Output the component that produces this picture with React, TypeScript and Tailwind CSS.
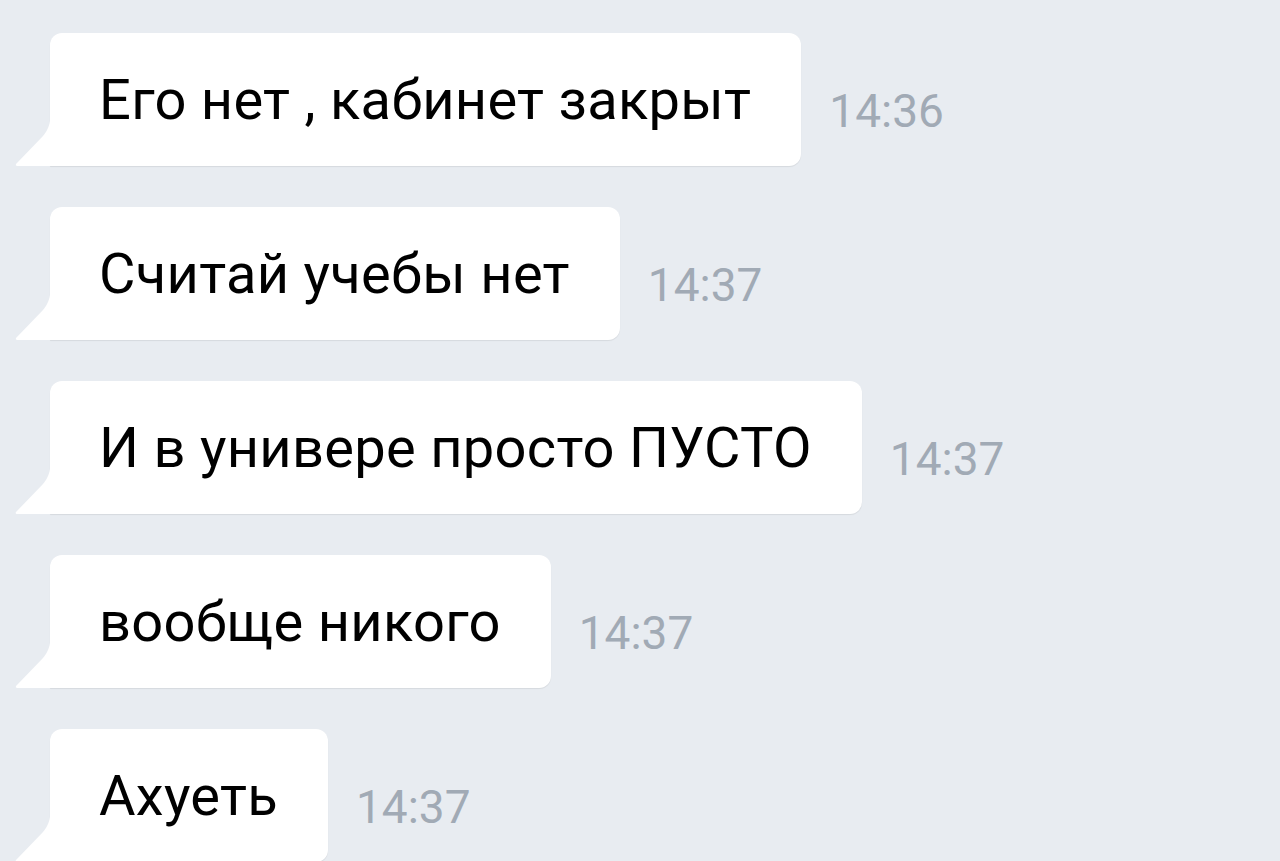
import React from "react";

const messages = [
  { text: "Его нет , кабинет закрыт", time: "14:36" },
  { text: "Считай учебы нет", time: "14:37" },
  { text: "И в универе просто ПУСТО", time: "14:37" },
  { text: "вообще никого", time: "14:37" },
  { text: "Ахуеть", time: "14:37" },
];

function Bubble({ text, time }: { text: string; time: string }) {
  return (
    <div className="flex items-end">
      <div className="relative h-[133px] bg-white rounded-[12px] rounded-bl-none pl-[49px] pr-[50px] pt-[39px] shadow-[0_1px_1px_rgba(0,0,0,0.08)]">
        <svg
          className="absolute left-[-36px] bottom-0"
          width="37"
          height="52"
          viewBox="0 0 37 52"
        >
          <path
            d="M36.5 0 C36.5 10 34 16 29 22 L2 50 Q1 51.5 3 52 L36.5 52 Z"
            fill="#ffffff"
          />
        </svg>
        <div className="text-[56px] leading-none text-black whitespace-nowrap tracking-[0.3px]">
          {text}
        </div>
      </div>
      <div className="ml-[28px] mb-[32px] text-[46px] leading-none text-[#a1aab5] whitespace-nowrap">
        {time}
      </div>
    </div>
  );
}

export default function App() {
  return (
    <div
      className="w-[1280px] h-[861px] overflow-hidden bg-[#e8ecf1] pl-[50px] pt-[33px] flex flex-col gap-[41px]"
      style={{ fontFamily: "Roboto, 'Noto Sans', sans-serif" }}
    >
      {messages.map((m, i) => (
        <Bubble key={i} text={m.text} time={m.time} />
      ))}
    </div>
  );
}
